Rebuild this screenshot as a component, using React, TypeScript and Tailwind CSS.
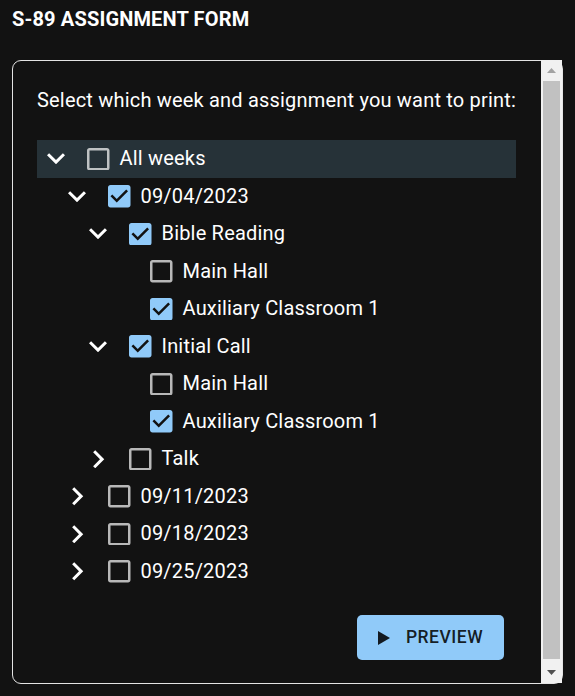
import React from 'react';

type Node = { label: string; level: number; expand?: 'open' | 'closed'; checked?: boolean; band?: boolean };

const rows: Node[] = [
  { label: 'All weeks', level: 0, expand: 'open', band: true },
  { label: '09/04/2023', level: 1, expand: 'open', checked: true },
  { label: 'Bible Reading', level: 2, expand: 'open', checked: true },
  { label: 'Main Hall', level: 3 },
  { label: 'Auxiliary Classroom 1', level: 3, checked: true },
  { label: 'Initial Call', level: 2, expand: 'open', checked: true },
  { label: 'Main Hall', level: 3 },
  { label: 'Auxiliary Classroom 1', level: 3, checked: true },
  { label: 'Talk', level: 2, expand: 'closed' },
  { label: '09/11/2023', level: 1, expand: 'closed' },
  { label: '09/18/2023', level: 1, expand: 'closed' },
  { label: '09/25/2023', level: 1, expand: 'closed' },
];

const indent = ['pl-0', 'pl-[21px]', 'pl-[42px]', 'pl-[63px]'];

function Chevron({ kind }: { kind?: 'open' | 'closed' }) {
  if (kind === 'open')
    return (
      <svg width="18" height="11.4" viewBox="6 8.5 12 7.6" fill="white">
        <path d="M16.59 8.59 12 13.17 7.41 8.59 6 10l6 6 6-6z" />
      </svg>
    );
  if (kind === 'closed')
    return (
      <svg width="11.4" height="18.5" viewBox="8.5 6 7.6 12" fill="white" className="ml-[2px]">
        <path d="M10 6 8.59 7.41 13.17 12l-4.58 4.59L10 18l6-6z" />
      </svg>
    );
  return null;
}

function Box({ checked }: { checked?: boolean }) {
  return checked ? (
    <svg width="22.5" height="22.5" viewBox="3 3 18 18" fill="#90caf9" className="shrink-0">
      <path d="M19 3H5c-1.11 0-2 .9-2 2v14c0 1.1.89 2 2 2h14c1.11 0 2-.9 2-2V5c0-1.1-.89-2-2-2zm-9 14l-5-5 1.41-1.41L10 14.17l7.59-7.59L19 8l-9 9z" />
    </svg>
  ) : (
    <svg width="22.5" height="22.5" viewBox="3 3 18 18" fill="rgba(255,255,255,0.7)" className="shrink-0">
      <path d="M19 5v14H5V5h14m0-2H5c-1.1 0-2 .9-2 2v14c0 1.1.9 2 2 2h14c1.1 0 2-.9 2-2V5c0-1.1-.9-2-2-2z" />
    </svg>
  );
}

export default function App() {
  return (
    <div className="w-[575px] h-[696px] bg-[#121212] text-white overflow-hidden" style={{ fontFamily: 'Roboto, "Liberation Sans", sans-serif' }}>
      <h1 className="pl-[12px] pt-[7px] text-[20px] leading-[24px] font-bold tracking-[0.15px]">S-89 ASSIGNMENT FORM</h1>

      <div className="relative ml-[12px] mt-[29px] w-[551px] h-[624px] border border-[#e4e4e4] rounded-[9px]">
        <div className="pl-[24px] pr-[46px] pt-[25px] tracking-[0.19px]">
          <p className="text-[20px] leading-[28px]">Select which week and assignment you want to print:</p>

          {/* tree */}
          <div className="mt-[26px]">
            {rows.map((r, i) => (
              <div key={i} className={`flex items-center h-[37.5px] ${indent[r.level]} ${r.band ? 'bg-[#263238]' : ''}`}>
                <div className="w-[38px] flex items-center justify-center shrink-0">
                  <Chevron kind={r.expand} />
                </div>
                <div className="ml-[12px]">
                  <Box checked={r.checked} />
                </div>
                <span className="ml-[10px] text-[20px] leading-[37.5px] whitespace-nowrap">{r.label}</span>
              </div>
            ))}
          </div>

          <div className="flex justify-end pr-[12px] mt-[25px]">
            <button className="flex items-center justify-center gap-[16px] w-[147px] h-[45px] rounded-[5px] bg-[#90caf9] text-[rgba(0,0,0,0.87)] text-[17.5px] font-medium tracking-[0.5px]">
              <svg width="12" height="14" viewBox="0 0 12 14" fill="currentColor">
                <path d="M0 0v14l12-7z" />
              </svg>
              PREVIEW
            </button>
          </div>
        </div>

        {/* scrollbar */}
        <div className="absolute right-0 top-[-1px] bottom-0 w-[21px] bg-[#f1f1f1] flex flex-col">
          <div className="h-[20px] flex items-center justify-center">
            <svg width="9" height="5" viewBox="0 0 9 5" fill="#a3a3a3">
              <path d="M4.5 0 9 5H0z" />
            </svg>
          </div>
          <div className="flex-1 px-[2px] pt-[1px] pb-[3px]">
            <div className="h-full bg-[#c1c1c1]" />
          </div>
          <div className="h-[21px] flex items-center justify-center">
            <svg width="9" height="5" viewBox="0 0 9 5" fill="#505050">
              <path d="M0 0h9L4.5 5z" />
            </svg>
          </div>
        </div>
      </div>
    </div>
  );
}
